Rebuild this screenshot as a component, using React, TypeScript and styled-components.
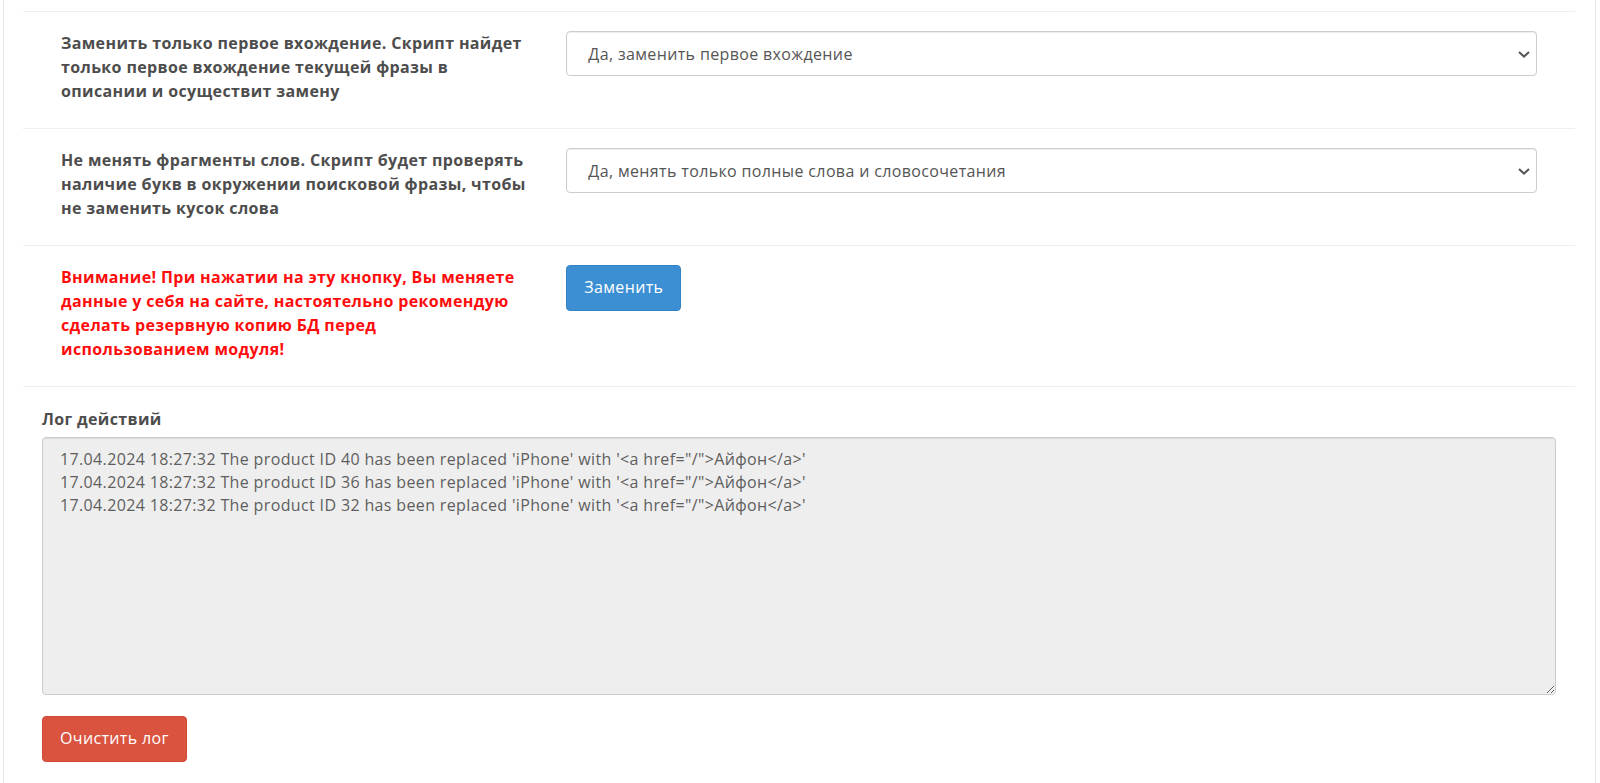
import React from 'react'
import styled, { createGlobalStyle } from 'styled-components'

const GlobalStyle = createGlobalStyle`
  html, body {
    margin: 0;
    padding: 0;
    background: #fff;
    overflow: hidden;
  }
  body {
    font-family: 'Open Sans', 'Noto Sans', 'Liberation Sans', sans-serif;
    font-size: 16px;
    letter-spacing: 0.36px;
    color: #555;
  }
  * {
    box-sizing: border-box;
  }
  button, select, textarea {
    letter-spacing: inherit;
  }
`

const Panel = styled.div`
  margin: 0 4px 0 3px;
  min-height: 100vh;
  padding: 11px 20px 0 19px;
  border-left: 1px solid #e3e3e3;
  border-right: 1px solid #e3e3e3;
  background: #fff;
`

const FormGroup = styled.div`
  display: grid;
  grid-template-columns: 1fr 2fr;
  padding: 19px 18px 19px;
  border-top: 1px solid #eee;
`

const Column = styled.div`
  padding: 0 20px;
`

const Label = styled.div<{ $warning?: boolean }>`
  margin-bottom: 6px;
  font-size: 16px;
  line-height: 24px;
  font-weight: 700;
  color: ${(p) => (p.$warning ? '#ff0d0d' : '#4d4d4d')};
`

const SelectWrap = styled.div`
  position: relative;
`

const Select = styled.select`
  display: block;
  width: 100%;
  height: 45px;
  padding: 0 36px 0 21px;
  font-family: inherit;
  font-size: 16px;
  color: #555;
  background: #fff;
  border: 1px solid #ccc;
  border-radius: 4px;
  box-shadow: inset 0 1px 1px rgba(0, 0, 0, 0.075);
  appearance: none;
  -webkit-appearance: none;
  outline: none;
`

const Chevron = styled.svg`
  position: absolute;
  right: 7px;
  top: 50%;
  margin-top: -3px;
  pointer-events: none;
`

const Button = styled.button<{ $variant: 'primary' | 'danger' }>`
  display: inline-block;
  padding: 10px 17px 11px;
  font-family: inherit;
  font-size: 16px;
  line-height: 22.8px;
  color: #fff;
  border-radius: 4px;
  cursor: pointer;
  background: ${(p) => (p.$variant === 'primary' ? '#3d8fd4' : '#d9533f')};
  border: 1px solid ${(p) => (p.$variant === 'primary' ? '#3282c4' : '#d04a37')};
`

const LogSection = styled.div`
  padding: 20px 19px 0;
  border-top: 1px solid #eee;
`

const LogArea = styled.textarea`
  display: block;
  width: 100%;
  height: 258px;
  margin: 0 0 21px;
  padding: 10px 17px;
  font-family: inherit;
  font-size: 16px;
  line-height: 23px;
  color: #5e5e5e;
  background: #eee;
  border: 1px solid #ccc;
  border-radius: 4px;
  box-shadow: inset 0 1px 1px rgba(0, 0, 0, 0.075);
  outline: none;
`

const SelectField = ({ value }: { value: string }) => (
  <SelectWrap>
    <Select defaultValue={value}>
      <option value={value}>{value}</option>
    </Select>
    <Chevron width="12" height="7" viewBox="0 0 12 7">
      <polyline points="1,1 6,5.6 11,1" fill="none" stroke="#555" strokeWidth="2" />
    </Chevron>
  </SelectWrap>
)

const LOG = [40, 36, 32]
  .map((id) => `17.04.2024 18:27:32 The product ID ${id} has been replaced 'iPhone' with '<a href="/">Айфон</a>'`)
  .join('\n')

export default function App() {
  return (
    <>
      <GlobalStyle />
      <Panel>
        <FormGroup>
          <Column>
            <Label>
              Заменить только первое вхождение. Скрипт найдет только первое вхождение текущей фразы в
              описании и осуществит замену
            </Label>
          </Column>
          <Column>
            <SelectField value="Да, заменить первое вхождение" />
          </Column>
        </FormGroup>
        <FormGroup>
          <Column>
            <Label>
              Не менять фрагменты слов. Скрипт будет проверять наличие букв в окружении поисковой фразы,
              чтобы не заменить кусок слова
            </Label>
          </Column>
          <Column>
            <SelectField value="Да, менять только полные слова и словосочетания" />
          </Column>
        </FormGroup>
        <FormGroup>
          <Column>
            <Label $warning>
              Внимание! При нажатии на эту кнопку, Вы меняете данные у себя на сайте, настоятельно
              рекомендую сделать резервную копию БД перед использованием модуля!
            </Label>
          </Column>
          <Column>
            <Button $variant="primary">Заменить</Button>
          </Column>
        </FormGroup>
        <LogSection>
          <Label>Лог действий</Label>
          <LogArea readOnly defaultValue={LOG} />
          <Button $variant="danger">Очистить лог</Button>
        </LogSection>
      </Panel>
    </>
  )
}
